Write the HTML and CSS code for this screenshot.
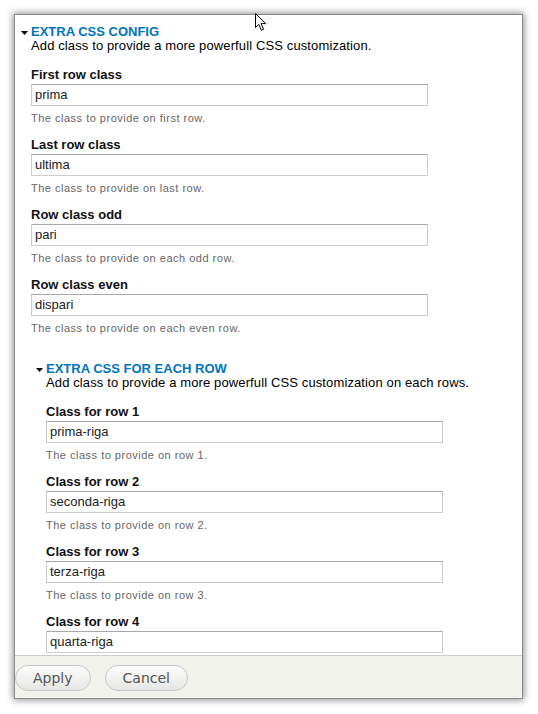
FILE: index.html
```html
<!DOCTYPE html>
<html>
<head>
<meta charset="utf-8">
<link rel="stylesheet" href="styles.css">
</head>
<body>
<div class="dialog">
  <div class="content">
    <section class="group">
      <div class="legend"><svg class="caret" width="7" height="4" viewBox="0 0 7 4"><polygon points="0,0 7,0 3.5,4" fill="#000"/></svg><span class="legend-title">EXTRA CSS CONFIG</span></div>
      <div class="group-desc">Add class to provide a more powerfull CSS customization.</div>
      <div class="field">
        <div class="label">First row class</div>
        <div class="input">prima</div>
        <div class="desc">The class to provide on first row.</div>
      </div>
      <div class="field">
        <div class="label">Last row class</div>
        <div class="input">ultima</div>
        <div class="desc">The class to provide on last row.</div>
      </div>
      <div class="field">
        <div class="label">Row class odd</div>
        <div class="input">pari</div>
        <div class="desc">The class to provide on each odd row.</div>
      </div>
      <div class="field">
        <div class="label">Row class even</div>
        <div class="input">dispari</div>
        <div class="desc">The class to provide on each even row.</div>
      </div>
      <section class="group nested">
        <div class="legend"><svg class="caret" width="7" height="4" viewBox="0 0 7 4"><polygon points="0,0 7,0 3.5,4" fill="#000"/></svg><span class="legend-title">EXTRA CSS FOR EACH ROW</span></div>
        <div class="group-desc">Add class to provide a more powerfull CSS customization on each rows.</div>
        <div class="field">
          <div class="label">Class for row 1</div>
          <div class="input">prima-riga</div>
          <div class="desc">The class to provide on row 1.</div>
        </div>
        <div class="field">
          <div class="label">Class for row 2</div>
          <div class="input">seconda-riga</div>
          <div class="desc">The class to provide on row 2.</div>
        </div>
        <div class="field">
          <div class="label">Class for row 3</div>
          <div class="input">terza-riga</div>
          <div class="desc">The class to provide on row 3.</div>
        </div>
        <div class="field">
          <div class="label">Class for row 4</div>
          <div class="input">quarta-riga</div>
          <div class="desc">The class to provide on row 4.</div>
        </div>
      </section>
    </section>
  </div>
  <div class="footer">
    <button class="btn">Apply</button>
    <button class="btn">Cancel</button>
  </div>
</div>
<svg class="cursor" width="14" height="20" viewBox="0 0 14 20"><path d="M1.5 1.5 L1.5 15.5 L4.8 12.4 L7.4 18.3 L9.6 17.3 L7.1 11.6 L11.6 11.6 Z" fill="#fff" stroke="#000" stroke-width="1" stroke-linejoin="miter"/></svg>
</body>
</html>
```
FILE: styles.css
```css
html, body {
  margin: 0;
  padding: 0;
  background: #fff;
}
body {
  position: relative;
  width: 538px;
  height: 714px;
  overflow: hidden;
  font-family: "Liberation Sans", Arial, sans-serif;
}
.dialog {
  margin: 14px 0 0 14px;
  width: 509px;
  height: 685px;
  box-sizing: border-box;
  border: 1px solid #8c8c8c;
  box-shadow: 0 0 7px 1px rgba(0, 0, 0, 0.45);
  background: #fff;
  display: flex;
  flex-direction: column;
}
.content {
  flex: 1;
  overflow: hidden;
  padding: 10px 0 0 16px;
}
.legend {
  display: flex;
  align-items: flex-start;
  height: 14px;
  line-height: 14px;
  margin-left: -10px;
}
.caret {
  margin: 6px 3px 0 0;
  flex: none;
}
.legend-title {
  font-size: 13px;
  font-weight: bold;
  color: #0074bd;
}
.group-desc {
  font-size: 13px;
  line-height: 14px;
  letter-spacing: 0.12px;
  color: #000;
  margin-bottom: 14px;
}
.field {
  margin-bottom: 12px;
}
.label {
  font-size: 13px;
  font-weight: bold;
  line-height: 16px;
  color: #111;
}
.input {
  margin-top: 1px;
  width: 397px;
  height: 22px;
  box-sizing: border-box;
  border: 1px solid #ccc;
  border-top-color: #a8a8a8;
  padding: 0 3px;
  font-size: 13px;
  line-height: 20px;
  color: #222;
}
.desc {
  margin-top: 5px;
  font-size: 11px;
  line-height: 14px;
  letter-spacing: 0.5px;
  color: #666;
}
.nested {
  margin: 27px 0 0 15px;
}
.footer {
  height: 43px;
  flex: none;
  box-sizing: border-box;
  border-top: 1px solid #ccc;
  background: #f2f2ec;
  padding: 9px 0 0 0;
  display: flex;
  gap: 14px;
  align-items: flex-start;
}
.btn {
  height: 26px;
  padding: 0 17px;
  border: 1px solid #c8c8c8;
  border-radius: 13px;
  background: linear-gradient(#fdfdfd, #e6e6e4);
  font-family: "DejaVu Sans", sans-serif;
  font-size: 14px;
  color: #555;
  line-height: 24px;
  margin: 0;
}
.cursor {
  position: absolute;
  left: 254px;
  top: 12px;
}
```
